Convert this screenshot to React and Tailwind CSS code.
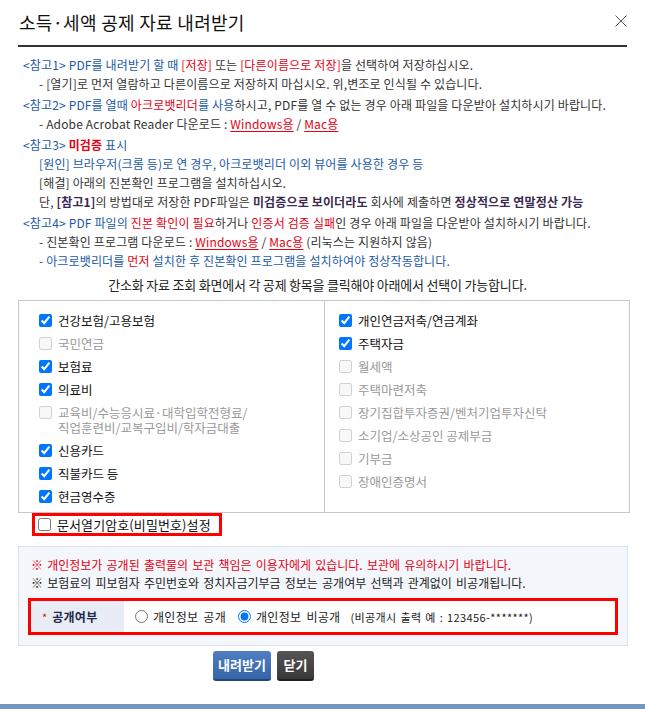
import React from "react";

const blue = "text-[#1a5aa6]";
const red = "text-[#e60012]";

function Link({ children }) {
  return (
    <a href="#" className="text-[#e60012] underline underline-offset-2">
      {children}
    </a>
  );
}

const leftItems = [
  { label: ["건강보험/고용보험"], checked: true },
  { label: ["국민연금"], disabled: true },
  { label: ["보험료"], checked: true },
  { label: ["의료비"], checked: true },
  { label: ["교육비/수능응시료·대학입학전형료/", "직업훈련비/교복구입비/학자금대출"], disabled: true },
  { label: ["신용카드"], checked: true },
  { label: ["직불카드 등"], checked: true },
  { label: ["현금영수증"], checked: true },
];

const rightItems = [
  { label: ["개인연금저축/연금계좌"], checked: true },
  { label: ["주택자금"], checked: true },
  { label: ["월세액"], disabled: true },
  { label: ["주택마련저축"], disabled: true },
  { label: ["장기집합투자증권/벤처기업투자신탁"], disabled: true },
  { label: ["소기업/소상공인 공제부금"], disabled: true },
  { label: ["기부금"], disabled: true },
  { label: ["장애인증명서"], disabled: true },
];

function CheckItem({ item }) {
  return (
    <label className="flex items-start gap-[6px] py-[4px] leading-[15px]">
      <input
        type="checkbox"
        defaultChecked={item.checked}
        disabled={item.disabled}
        className="m-0 mt-[1px] w-[13px] h-[13px] shrink-0"
      />
      <span className={item.disabled ? "text-[#999]" : "text-[#111]"}>
        {item.label.map((l, i) => (
          <span key={i} className="block whitespace-nowrap h-[15px]">{l}</span>
        ))}
      </span>
    </label>
  );
}

export default function App() {
  return (
    <div className="w-[645px] h-[709px] bg-white flex flex-col overflow-hidden font-['Noto_Sans_CJK_KR','Noto_Sans',sans-serif] text-[#333]">
      {/* header */}
      <div className="flex items-center justify-between pl-[19px] pr-[18px] pt-[12px] h-[32px]">
        <h1 className="text-[18px] leading-[20px] tracking-[0.3px] text-[#111] font-normal">소득·세액 공제 자료 내려받기</h1>
        <svg width="12" height="12" viewBox="0 0 12 12" className="mt-[-2px]">
          <path d="M0.5 0.5 L11.5 11.5 M11.5 0.5 L0.5 11.5" stroke="#555" strokeWidth="1" />
        </svg>
      </div>
      <div className="mx-[18px] h-[2px] bg-[#333] mt-[13px]" />

      {/* notes */}
      <div className="pl-[23px] mt-[8px] text-[12px] leading-[19px] tracking-[0.15px] whitespace-nowrap">
        <div>
          <div>
            <span className={blue}>&lt;참고1&gt; PDF를 내려받기 할 때 </span>
            <span className={red}>[저장]</span> 또는 <span className={red}>[다른이름으로 저장]</span>을 선택하여 저장하십시오.
          </div>
          <div className="pl-[16px]">- [열기]로 먼저 열람하고 다른이름으로 저장하지 마십시오. 위,변조로 인식될 수 있습니다.</div>
        </div>
        <div className="mt-[2px]">
          <div>
            <span className={blue}>&lt;참고2&gt; PDF를 열때 </span>
            <span className={red}>아크로뱃리더</span>
            <span className={blue}>를 사용</span>하시고, PDF를 열 수 없는 경우 아래 파일을 다운받아 설치하시기 바랍니다.
          </div>
          <div className="pl-[16px]">
            - Adobe Acrobat Reader 다운로드 : <Link>Windows용</Link> / <Link>Mac용</Link>
          </div>
        </div>
        <div className="mt-[2px]">
          <div>
            <span className={blue}>&lt;참고3&gt; </span>
            <span className={`${red} font-bold`}>미검증</span>
            <span className={blue}> 표시</span>
          </div>
          <div className={`pl-[16px] ${blue}`}>[원인] 브라우저(크롬 등)로 연 경우, 아크로뱃리더 이외 뷰어를 사용한 경우 등</div>
          <div className="pl-[16px]">[해결] 아래의 진본확인 프로그램을 설치하십시오.</div>
          <div className="pl-[16px]">
            단, <b className="text-[#3a2a50]">[참고1]</b>의 방법대로 저장한 PDF파일은{" "}
            <b className="text-[#3a2a50]">미검증으로 보이더라도</b> 회사에 제출하면{" "}
            <b className="text-[#3a2a50]">정상적으로 연말정산 가능</b>
          </div>
        </div>
        <div className="mt-[2px]">
          <div>
            <span className={blue}>&lt;참고4&gt; PDF 파일의 </span>
            <span className={red}>진본 확인이 필요</span>하거나 <span className={red}>인증서 검증 실패</span>인 경우 아래 파일을 다운받아 설치하시기 바랍니다.
          </div>
          <div className="pl-[16px]">
            - 진본확인 프로그램 다운로드 : <Link>Windows용</Link> / <Link>Mac용</Link> (리눅스는 지원하지 않음)
          </div>
          <div className={`pl-[16px] ${blue}`}>
            - 아크로뱃리더를 <span className={red}>먼저</span> 설치한 후 진본확인 프로그램을 설치하여야 정상작동합니다.
          </div>
        </div>
      </div>

      <p className="mt-[5px] text-center text-[13px] leading-[19px] tracking-[-0.2px] text-[#222] pr-[10px]">
        간소화 자료 조회 화면에서 각 공제 항목을 클릭해야 아래에서 선택이 가능합니다.
      </p>

      {/* deduction items */}
      <div className="mt-[6px] mx-[18px] w-[612px] border border-[#c8c8c8] grid grid-cols-[306px_1fr] text-[12.5px]">
        <div className="border-r border-[#c8c8c8] pl-[20px] pt-[8px] pb-[4px]">
          {leftItems.map((it, i) => (
            <CheckItem key={i} item={it} />
          ))}
        </div>
        <div className="pl-[14px] pt-[8px] pb-[4px]">
          {rightItems.map((it, i) => (
            <CheckItem key={i} item={it} />
          ))}
        </div>
      </div>

      {/* password option */}
      <div className="ml-[32px] w-[190px] h-[23px] border-[3px] border-[#ff0000] flex items-center gap-[6px] pl-[3px] text-[13px] tracking-[0.1px] text-[#111]">
        <input type="checkbox" className="m-0 w-[13px] h-[13px]" />
        <span className="whitespace-nowrap">문서열기암호(비밀번호)설정</span>
      </div>

      {/* privacy panel */}
      <div className="mt-[10px] mx-[18px] w-[610px] h-[100px] bg-[#f3f6fb] border border-[#dde3ed] pl-[12px] pt-[9px] text-[12px] leading-[18px] tracking-[0px] [word-spacing:1.5px] whitespace-nowrap">
        <div className="text-[#e60012]">※ 개인정보가 공개된 출력물의 보관 책임은 이용자에게 있습니다. 보관에 유의하시기 바랍니다.</div>
        <div className="text-[#222]">※ 보험료의 피보험자 주민번호와 정치자금기부금 정보는 공개여부 선택과 관계없이 비공개됩니다.</div>
        <div className="mt-[6px] -ml-[3px] w-[590px] h-[37px] border-[3px] border-[#ff0000] flex items-stretch bg-white [word-spacing:0px]">
          <div className="w-[93px] bg-[#e8ecf5] flex items-center pl-[11px] gap-[5px]">
            <span className="text-[#e60012] text-[11px]">*</span>
            <span className="font-bold text-[#1c2a48] text-[12px] tracking-[0.3px]">공개여부</span>
          </div>
          <div className="flex items-center pl-[11px] text-[#222] tracking-[0.3px]">
            <label className="flex items-center gap-[5px]">
              <input type="radio" name="open" className="m-0 w-[13px] h-[13px]" />
              <span className="[word-spacing:2px]">개인정보 공개</span>
            </label>
            <label className="flex items-center gap-[5px] ml-[12px]">
              <input type="radio" name="open" defaultChecked className="m-0 w-[13px] h-[13px]" />
              <span className="[word-spacing:2px]">개인정보 비공개</span>
            </label>
            <span className="ml-[10px] text-[11px] tracking-[0.4px] [word-spacing:1px]">(비공개시 출력 예 : 123456-*******)</span>
          </div>
        </div>
      </div>

      {/* buttons */}
      <div className="mt-[5px] flex gap-[6px] pl-[213px]">
        <button className="w-[58px] h-[30px] rounded-[3px] bg-gradient-to-b from-[#4f7fc0] to-[#3565a8] border-b-2 border-[#22467a] text-white text-[13px] font-bold">
          내려받기
        </button>
        <button className="w-[37px] h-[30px] rounded-[3px] bg-gradient-to-b from-[#555] to-[#383838] border-b-2 border-[#1f1f1f] text-white text-[13px] font-bold">
          닫기
        </button>
      </div>

      <div className="mt-auto h-[5px] bg-[#7397bf]" />
    </div>
  );
}
